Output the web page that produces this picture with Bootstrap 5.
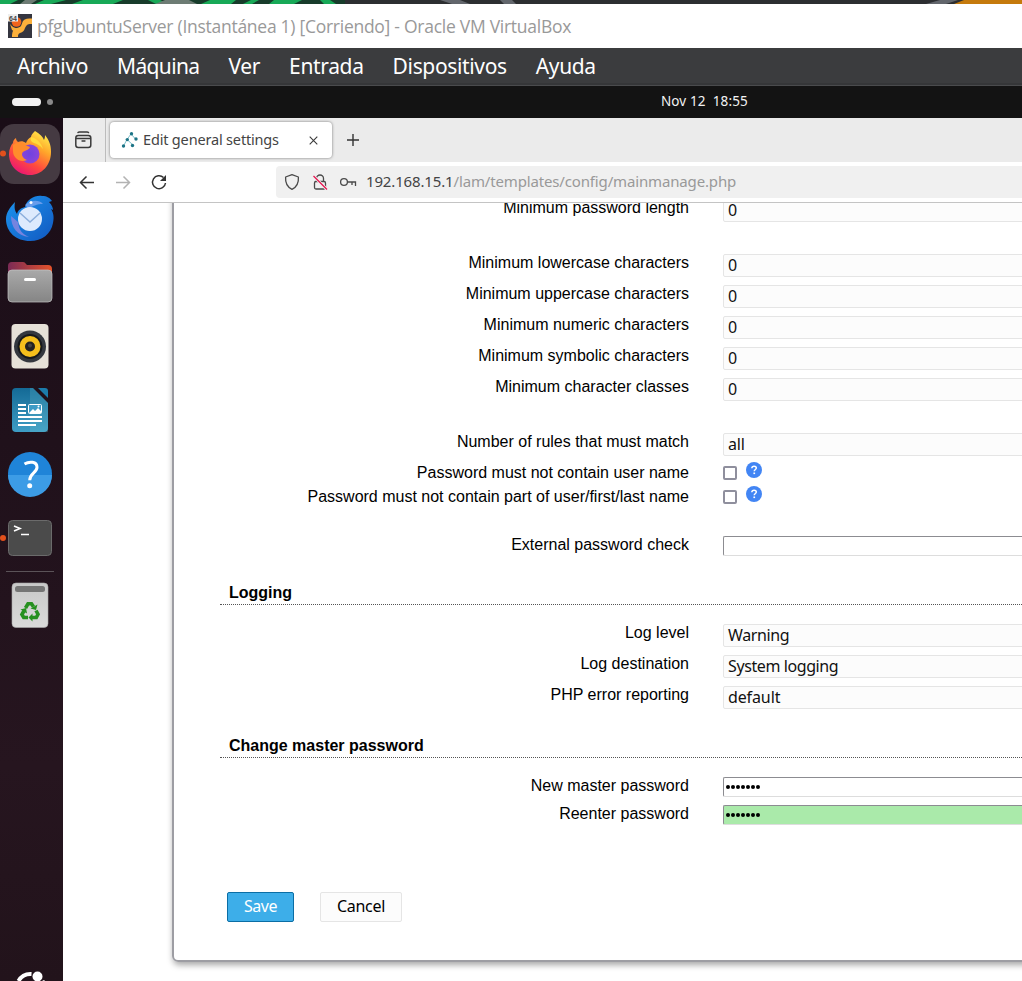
<!DOCTYPE html>
<html lang="es">
<head>
<meta charset="utf-8">
<meta name="viewport" content="width=device-width, initial-scale=1">
<title>pfgUbuntuServer - Oracle VM VirtualBox</title>
<link href="https://cdn.jsdelivr.net/npm/bootstrap@5.3.0/dist/css/bootstrap.min.css" rel="stylesheet">
<style>
  html, body { height: 981px; overflow: hidden; }
  body { background: #fff; color: #000; font-family: "Liberation Sans", Arial, sans-serif; font-size: 16px; line-height: 24px; }
  svg { display: block; flex: none; }
  .ui { font-family: "Noto Sans", "Open Sans", sans-serif; white-space: pre; }
  .wallpaper { height: 4px; }
  .titlebar { height: 44px; padding-left: 8px; color: #999; }
  .titlebar .ui { font-family: "Open Sans", sans-serif; font-size: 17.5px; margin-left: 5px; letter-spacing: -.27px; }
  .menubar { height: 38px; background: #3b3c3e; border-bottom: 1px solid #4a4b4d; box-shadow: inset 0 -2px #353638; color: #fff; font-size: 21px; padding: 0 0 2px 17px; gap: 29px; letter-spacing: -.35px; }
  .menubar .tight { letter-spacing: -.65px; }
  .topbar { height: 32px; background: #131313; color: #f2f2f2; font-size: 13.5px; letter-spacing: .1px; }
  .pill { width: 29px; height: 8px; background: #f2f2f2; margin-left: 12px; }
  .dot { width: 6px; height: 6px; background: #8a8a8a; margin-left: 6px; }
  .clock { margin-left: 608px; padding-bottom: 2px; }
  .main-area { height: 863px; }
  .dock { width: 63px; flex: none; background: linear-gradient(#1a0d17, #26151f 75%, #22131b); padding-top: 4px; }
  .dock hr { width: 48px; margin: 1px 0 1px 6px; border: 0; height: 1px; background: #5b5358; opacity: 1; }
  .tabstrip { height: 44px; background: #ebebeb; }
  .sidebar-btn { width: 43px; height: 44px; border-right: 1px solid #bcbcbc; padding-left: 12px; }
  .tab-item { width: 222px; height: 36px; margin-left: 4px; background: #fff; border-radius: 4px; box-shadow: 0 0 3px rgba(0,0,0,.5); color: #444; font-size: 14.5px; padding-left: 11px; }
  .tab-item .ui { letter-spacing: -.17px; padding-bottom: 2px; }
  .tab-close { margin-right: 14px; }
  .new-tab { margin-left: 15px; }
  .toolbar { height: 41px; border-bottom: 1px solid #c4c4c4; background: #fff; }
  .urlbar { height: 32px; margin-left: 100px; background: #f0f0f0; border-radius: 4px 0 0 4px; font-size: 15px; padding-left: 6px; color: #444; letter-spacing: -.15px; }
  .urlbar .ui { padding-bottom: 2px; }
  .urlbar .path { color: #999; }
  .page { height: 778px; overflow: hidden; }
  .panel { height: 789px; margin: -30px -20px 0 109px; border: 2px solid #9d9da3; border-radius: 6px; box-shadow: 1px 3px 6px rgba(0,0,0,.35); padding: 20px 0 0 45px; }
  .field { height: 31px; }
  .field > .name { width: 470px; text-align: right; flex: none; padding-top: 1px; }
  .field > .ctl { margin-left: 34px; flex: 1; }
  .field.short { height: 28px; }
  .gap-above { margin-top: 24px; }
  .pick { height: 23px; margin-top: 4px; border: 1px solid #e5e5e5; background: #fcfcfc; border-radius: 2px; padding-left: 4px; line-height: 21px; color: #111; letter-spacing: -.4px; }
  .pick.loose { letter-spacing: -.12px; }
  .line-in { height: 20px; margin-top: 4px; border: 1px solid; border-color: #8c8c91 #ddd #ddd #8c8c91; border-radius: 2px; }
  .dots { padding: 7px 0 0 2px; gap: 1px; }
  .dots i { width: 4px; height: 4px; border-radius: 50%; background: #000; }
  .match { background: #aaeaaa; }
  .tick { height: 24px; }
  .box { width: 14px; height: 14px; margin-top: 6px; border: 2px solid #8f8f9d; border-radius: 2px; background: #fff; }
  .help { margin: 2px 0 0 9px; }
  .heading { font-size: 16px; font-weight: 700; line-height: 23px; margin: 20px 0 15px 1px; padding: 1px 0 0 9px; border-bottom: 1px dotted #555; }
  .actions { padding: 63px 0 0 8px; }
  .action { height: 30px; border-radius: 2px; border: 1px solid #e5e5e5; background: #fcfcfc; padding: 0 0 2px; color: #000; line-height: 25px; }
  .action.save { width: 67px; background: #3daee9; border-color: #0b6ea5; color: #fff; letter-spacing: -.45px; }
  .action.cancel { width: 82px; margin-left: 26px; letter-spacing: -.3px; }
</style>
</head>
<body>
<svg class="wallpaper w-100" viewBox="0 0 1022 4" preserveAspectRatio="none">
  <rect width="1022" height="4" fill="#2c2e31"/><rect width="345" height="4" fill="#173c2b"/>
  <path d="M0 0h18l-8 4H0zM44 0h22l-15 4H35zM83 0h40l-10 4H72zM148 0h12l8 4h-12zM210 0h26l-5 4h-30zM251 0h8l-7 4h-9zM274 0h28l-8 4h-25zM320 0h10l6 4h-12z" fill="#18a957"/>
  <path d="M25 0h12l-6 4H20zM165 0h24l8 4h-42z" fill="#6d7c74"/>
  <path d="M440 0h20l10 4h-18zM500 0h12l4 4h-12zM940 0h18l-12 4h-20z" fill="#62666c"/>
  <path d="M964 0h58v4H954z" fill="#c57a0c"/>
</svg>
<header class="titlebar d-flex align-items-center">
  <svg width="24" height="24" viewBox="0 0 24 24">
    <rect width="24" height="24" fill="#34353f"/>
    <circle cx="8.500" cy="8" r="4.800" fill="#f2641c"/>
    <path d="M4 23c0-5 1-8 5-9 5-1 4-3 6-7 2-2.500 5-2.500 9-2.500V10c-4 0-5 0-7 4-1 3-2 4-5 5-2 1-2 2-2 4z" fill="#fbb03b"/>
    <path d="M2 10c3 4 6 5 11 4l-4 5-5-3z" fill="#fbb03b"/>
    <rect width="10" height="7.500" fill="#eee"/>
    <text x="1" y="6.500" font-family="Liberation Sans" font-size="7" font-weight="700" fill="#444">64</text>
  </svg>
  <span class="ui">pfgUbuntuServer (Instantánea 1) [Corriendo] - Oracle VM VirtualBox</span>
</header>
<nav class="menubar ui d-flex align-items-center">
  <span>Archivo</span><span class="tight">Máquina</span><span>Ver</span><span>Entrada</span><span>Dispositivos</span><span>Ayuda</span>
</nav>
<div class="topbar ui d-flex align-items-center"><span class="pill rounded-pill"></span><span class="dot rounded-circle"></span><span class="clock">Nov 12  18:55</span></div>

<div class="main-area d-flex">
  <aside class="dock d-flex flex-column">
    <svg width="62" height="64" viewBox="0 122 62 64">
      <defs>
        <linearGradient id="fx" x1=".85" y1="0" x2=".25" y2="1"><stop offset="0" stop-color="#fff44f"/><stop offset=".35" stop-color="#ffa52a"/><stop offset=".68" stop-color="#ff4a3e"/><stop offset="1" stop-color="#e91278"/></linearGradient>
        <radialGradient id="fp"><stop offset="0" stop-color="#6f42e0"/><stop offset="1" stop-color="#8b45d8"/></radialGradient>
        <linearGradient id="tb" x1="0" y1="0" x2="1" y2="1"><stop offset="0" stop-color="#1d96f0"/><stop offset="1" stop-color="#1157bf"/></linearGradient>
      </defs>
      <rect y="124" width="60" height="60" rx="14" fill="#453a42"/>
      <path d="M3 150.500a3 3 0 0 1 0 6 3 3 0 0 1 0-6z" fill="#e2501c"/>
      <path d="M35 131c5 3 8 6 9 9 1-2 1-4 1-5 4 5 6 10 6 17 0 13-9 23-21 23S9 166 9 154c0-5 2-9 4-11 0-2 1-4 3-5 0 2 1 3 2 4 3-1 5-1 8 1 1-3 3-5 5-6 0-2 2-4 4-6z" fill="url(#fx)"/>
      <circle cx="30" cy="154" r="9.500" fill="url(#fp)"/>
      <path d="M13 145c4-3 9-3 12 0l5 2c-1 3-4 3-7 5-2 2-1 6 4 8-7 3-14-2-14-9z" fill="#ff8c2c"/>
      <path d="M31 137c5 1 10 5 12 12-3-4-6-5-9-6-3-1-4-3-3-6z" fill="#ffdb3d"/>
    </svg>
    <svg width="62" height="64" viewBox="0 186 62 64">
      <path d="M25 207c2-8 10-12 17-11 5 0 8 2 10 5l-3 1c3 3 4 6 4 8l-2-1c3 5 3 9 2 14-2 11-11 18-23 18-14 0-24-9-24-22 0-6 4-12 9-17-1 6 0 9 2 12 1-4 4-6 8-7z" fill="url(#tb)"/>
      <path d="M25 205c5-5 14-6 18-1-6 0-11 2-14 5z" fill="#9cb3f5" opacity=".6"/><circle cx="31" cy="202.500" r="1.500" fill="#fff"/>
      <path d="M11 216c0 11 6 20 18 21-7-3-10-7-11-15z" fill="#7584df"/>
      <circle cx="30" cy="219" r="12" fill="#ddeafd"/><path d="M20 213l10 9 10-9" fill="none" stroke="#8dafdc" stroke-width="1.500"/>
    </svg>
    <svg width="62" height="64" viewBox="0 250 62 64">
      <defs><linearGradient id="fo"><stop stop-color="#7b2a55"/><stop offset="1" stop-color="#e5532b"/></linearGradient><linearGradient id="gr" x2="0" y2="1"><stop stop-color="#a9a9a9"/><stop offset="1" stop-color="#858585"/></linearGradient></defs>
      <path d="M8 266q0-4 4-4h11q2 0 3 2l1 1h21q4 0 4 4v15H8z" fill="url(#fo)"/>
      <rect x="8" y="270" width="44" height="32" rx="4" fill="url(#gr)" stroke="#c4c4c4" stroke-width=".7"/>
      <rect x="24" y="278" width="12" height="3" rx="1.500" fill="#fff"/>
    </svg>
    <svg width="62" height="64" viewBox="0 314 62 64">
      <rect x="11.500" y="324" width="37" height="44.500" rx="4" fill="#e6e1d8"/>
      <circle cx="30" cy="346.500" r="16" fill="#34383f"/><circle cx="30" cy="346.500" r="11.500" fill="#f5bf1c" stroke="#17191c" stroke-width="2"/>
      <circle cx="30" cy="346.500" r="5" fill="#222"/><circle cx="30" cy="345.500" r="2" fill="#444"/>
    </svg>
    <svg width="62" height="64" viewBox="0 378 62 64">
      <defs><linearGradient id="wr" x2="0" y2="1"><stop stop-color="#146a96"/><stop offset="1" stop-color="#3e9dc5"/></linearGradient></defs>
      <path d="M12 392q0-4 4-4h17l15 15v25q0 4-4 4H16q-4 0-4-4z" fill="url(#wr)"/><path d="M30 388h3l15 15v29H30z" fill="#6bc" opacity=".25"/>
      <path d="M38 388h7q3 0 3 3v7z" fill="#1c7cab"/>
      <path d="M18 404h8v2h-8zM18 408h8v2h-8zM18 412h8v2h-8zM18 416h24v2H18zM18 420h24v2H18zM18 424h18v2H18z" fill="#fff"/>
      <rect x="28.500" y="404.500" width="13" height="9" rx="1" fill="#3d9bc6" stroke="#fff"/><path d="M29 413l4-4 2 2 3-3 3 3v2z" fill="#fff"/><circle cx="38.500" cy="406.500" r="1" fill="#fff"/>
    </svg>
    <svg width="62" height="64" viewBox="0 442 62 64">
      <circle cx="30" cy="474" r="22" fill="#1f84d8"/><path d="M8 475a22 22 0 0 0 44 0z" fill="#3c9ce6"/>
      <path d="M24.500 464c5-3 12.500-2.500 12.500 3.200 0 5.500-7.300 6-7.300 13" fill="none" stroke="#fff" stroke-width="3"/><circle cx="29.700" cy="485.800" r="2.500" fill="#fff"/>
    </svg>
    <svg width="62" height="64" viewBox="0 506 62 64">
      <path d="M3 535a3 3 0 0 1 0 6 3 3 0 0 1 0-6z" fill="#e2501c"/>
      <rect x="8.500" y="520.500" width="43" height="35" rx="4" fill="#4b4b4b" stroke="#6b6b6b"/>
      <path d="M14 526l6 2.500-6 2.500M21 534.500h8" fill="none" stroke="#fff" stroke-width="1.600"/>
    </svg>
    <hr>
    <svg width="62" height="64" viewBox="0 573 62 64">
      <defs><linearGradient id="tr" x2="0" y2="1"><stop stop-color="#c8c8c8"/><stop offset="1" stop-color="#dadada"/></linearGradient></defs>
      <rect x="12" y="583" width="36" height="44.500" rx="4" fill="url(#tr)" stroke="#aaa" stroke-width=".6"/><rect x="15" y="586" width="30" height="6" rx="2.500" fill="#757575"/>
      <g fill="none" stroke="#26901f" stroke-width="3.600"><path d="M25.500 608l2.500-4.200h3.500l2 3"/><path d="M36 610.500l2 3.700-1.700 3.300H32"/><path d="M28 617.500h-4.300l-1.800-3 2-3.500"/></g>
      <g fill="#26901f"><path d="M30.500 608.500l5.500 1.500 1.500-5.500z"/><path d="M32.500 613.500v8l-4-4z"/><path d="M20.500 609.500l5.500-1.500 1 5.500z"/></g>
    </svg>
    <svg class="mt-auto" width="62" height="14" viewBox="0 967 62 14">
      <path d="M18.500 981a14 14 0 0 1 13-7" fill="none" stroke="#fff" stroke-width="4"/><circle cx="37.500" cy="976.500" r="5" fill="#fff"/><path d="M42 981l2-1 1 1z" fill="#fff"/>
    </svg>
  </aside>

  <section class="flex-grow-1 overflow-hidden">
    <div class="tabstrip d-flex align-items-center">
      <div class="sidebar-btn d-flex align-items-center">
        <svg width="18" height="18" viewBox="0 0 18 18" fill="none" stroke="#3a3a3a" stroke-width="1.500" stroke-linecap="round"><path d="M3 1.500Q3.500 1 4.500 1h7.500q1 0 1.500.5"/><rect x=".8" y="4.500" width="15" height="12" rx="2.500"/><path d="M1.500 7.500h13.500M7 10h3" stroke-width="1.300"/></svg>
      </div>
      <div class="tab-item d-flex align-items-center">
        <svg width="18" height="18" viewBox="0 0 18 18"><path d="M10 3L6 8.500 2.500 15M10 3l4.500 5M6 8.500L12 14M2.500 15" stroke="#7dc0cb" fill="none"/><g fill="#1d7486"><circle cx="10.500" cy="2.800" r="1.700"/><circle cx="6.300" cy="8.600" r="1.700"/><circle cx="15" cy="8" r="1.700"/><circle cx="2.500" cy="15" r="1.700"/><circle cx="11.500" cy="14.500" r="1.700"/></g></svg>
        <span class="ui ms-1">Edit general settings</span>
        <svg class="tab-close ms-auto" width="9" height="9" viewBox="0 0 9 9"><path d="M.7.700l7.600 7.600M8.300.700L.7 8.300" stroke="#3a3a3a" stroke-width="1.100"/></svg>
      </div>
      <svg class="new-tab" width="12" height="12" viewBox="0 0 12 12"><path d="M6 0v12M0 6h12" stroke="#333" stroke-width="1.400"/></svg>
    </div>
    <div class="toolbar d-flex align-items-center">
      <svg width="113" height="40" viewBox="63 162 113 40" fill="none" stroke="#333" stroke-width="1.500">
        <path d="M94 182.500H81M86.500 176.500l-6 6 6 6"/><path d="M116 182.500h13M123.500 176.500l6 6-6 6" stroke="#b3b3b3"/>
        <path d="M163.500 177.500a6.500 6.500 0 1 0 2 5.500"/><path d="M166 175v6h-6z" fill="#333" stroke="none"/>
      </svg>
      <div class="urlbar d-flex align-items-center flex-grow-1">
        <svg width="84" height="32" viewBox="282 166 84 32" fill="none" stroke="#4a4a4a" stroke-width="1.300">
          <path d="M292 174.700l6.400 2.300c.4 5.500-1.500 10-6.400 12.300-4.900-2.300-6.800-6.800-6.400-12.300z" stroke-linejoin="round"/>
          <path d="M316.500 181.500v-3a3.500 3.500 0 0 1 7 0v3"/><rect x="314.500" y="181.500" width="11" height="7.500" rx="1.500"/><path d="M313.500 176l13.500 13.500" stroke="#f0f0f0" stroke-width="3"/><path d="M313.500 176l13.500 13.500" stroke="#e8134f"/>
          <circle cx="344" cy="182" r="3.400"/><path d="M347.500 182h8v4M352 182v3"/>
        </svg>
        <span class="ui">192.168.15.1<span class="path">/lam/templates/config/mainmanage.php</span></span>
      </div>
    </div>

    <main class="page">
      <div class="panel">
        <div class="field d-flex"><div class="name">Minimum password length</div><div class="ctl pick ui">0</div></div>
        <div class="field gap-above d-flex"><div class="name">Minimum lowercase characters</div><div class="ctl pick ui">0</div></div>
        <div class="field d-flex"><div class="name">Minimum uppercase characters</div><div class="ctl pick ui">0</div></div>
        <div class="field d-flex"><div class="name">Minimum numeric characters</div><div class="ctl pick ui">0</div></div>
        <div class="field d-flex"><div class="name">Minimum symbolic characters</div><div class="ctl pick ui">0</div></div>
        <div class="field d-flex"><div class="name">Minimum character classes</div><div class="ctl pick ui">0</div></div>
        <div class="field gap-above d-flex"><div class="name">Number of rules that must match</div><div class="ctl pick loose ui">all</div></div>
        <div class="field tick d-flex"><div class="name">Password must not contain user name</div><div class="ctl d-flex"><span class="box"></span><svg class="help" width="16" height="16" viewBox="0 0 16 16"><circle cx="8" cy="8" r="8" fill="#4285f4"/><path d="M5.800 6.200q.2-2 2.300-2 2.200 0 2.200 1.800c0 1.500-2.100 1.500-2.100 3.300" fill="none" stroke="#fff" stroke-width="1.500"/><rect x="7.400" y="10.500" width="1.700" height="1.600" fill="#fff"/></svg></div></div>
        <div class="field tick d-flex"><div class="name">Password must not contain part of user/first/last name</div><div class="ctl d-flex"><span class="box"></span><svg class="help" width="16" height="16" viewBox="0 0 16 16"><circle cx="8" cy="8" r="8" fill="#4285f4"/><path d="M5.800 6.200q.2-2 2.300-2 2.200 0 2.200 1.800c0 1.500-2.100 1.500-2.100 3.300" fill="none" stroke="#fff" stroke-width="1.500"/><rect x="7.400" y="10.500" width="1.700" height="1.600" fill="#fff"/></svg></div></div>
        <div class="field short gap-above d-flex"><div class="name">External password check</div><div class="ctl line-in"></div></div>
        <h2 class="heading">Logging</h2>
        <div class="field d-flex"><div class="name">Log level</div><div class="ctl pick ui">Warning</div></div>
        <div class="field d-flex"><div class="name">Log destination</div><div class="ctl pick ui">System logging</div></div>
        <div class="field d-flex"><div class="name">PHP error reporting</div><div class="ctl pick loose ui">default</div></div>
        <h2 class="heading">Change master password</h2>
        <div class="field short d-flex"><div class="name">New master password</div><div class="ctl line-in dots d-flex"><i></i><i></i><i></i><i></i><i></i><i></i><i></i></div></div>
        <div class="field short d-flex"><div class="name">Reenter password</div><div class="ctl line-in dots match d-flex"><i></i><i></i><i></i><i></i><i></i><i></i><i></i></div></div>
        <div class="actions d-flex"><button class="action save ui">Save</button><button class="action cancel ui">Cancel</button></div>
      </div>
    </main>
  </section>
</div>
<script src="https://cdn.jsdelivr.net/npm/bootstrap@5.3.0/dist/js/bootstrap.bundle.min.js"></script>
</body>
</html>
